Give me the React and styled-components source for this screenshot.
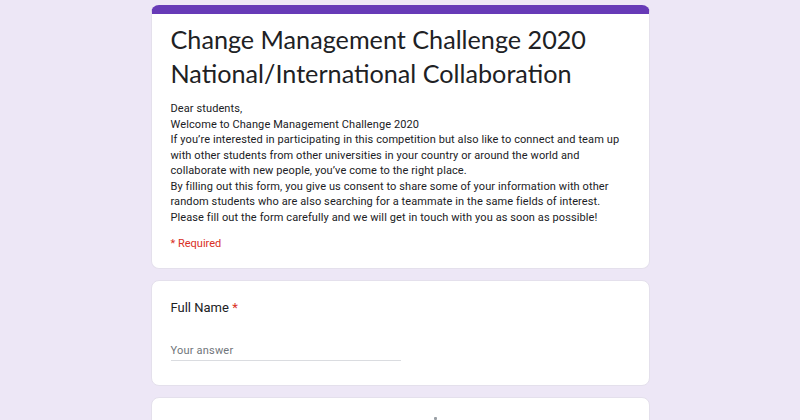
import React from 'react';
import styled, { createGlobalStyle } from 'styled-components';

const GlobalStyle = createGlobalStyle`
  html, body {
    margin: 0;
    padding: 0;
    background: #ede7f6;
    font-family: Roboto, "Liberation Sans", sans-serif;
    color: #202124;
  }
`;

const Page = styled.div`
  display: flex;
  flex-direction: column;
  align-items: center;
  gap: 11px;
  padding-top: 5px;
  height: 420px;
  overflow: hidden;
`;

const Card = styled.div`
  width: 499px;
  box-sizing: border-box;
  background: #fff;
  border-radius: 8px;
  border: 1px solid #e4e0ec;
  border-top: ${p => (p.$accent ? '9px solid #673ab7' : '1px solid #e4e0ec')};
  padding: ${p => p.$pad || '18px 19px 19px'};
  flex-shrink: 0;
`;

const Title = styled.h1`
  margin: 0;
  font-family: Lato, "Open Sans", sans-serif;
  font-weight: 400;
  font-size: 25.2px;
  line-height: 34px;
  color: #202124;
`;

const Description = styled.div`
  margin-top: 11px;
  font-size: 11px;
  line-height: 15.5px;
  letter-spacing: 0.1px;
  color: #202124;
`;

const Required = styled.div`
  margin-top: 12px;
  font-size: 11px;
  color: #d93025;
`;

const Question = styled.div`
  font-size: 13px;
  line-height: 18px;
  color: #202124;
`;

const Star = styled.span`
  color: #d93025;
`;

const Answer = styled.div`
  margin-top: 27px;
  width: 230px;
  border-bottom: 1px solid #dadce0;
  padding-bottom: 3px;
  font-size: 11px;
  letter-spacing: 0.2px;
  color: #70757a;
`;

const Dot = styled.div`
  width: 3px;
  height: 3px;
  margin: 19px 0 0 263px;
  background: #9aa0a6;
  border-radius: 1px;
`;

export default function App() {
  return (
    <>
      <GlobalStyle />
      <Page>
        <Card $accent $pad="8px 19px 18px">
          <Title>
            Change Management Challenge 2020
            <br />
            National/International Collaboration
          </Title>
          <Description>
            Dear students,
            <br />
            Welcome to Change Management Challenge 2020
            <br />
            If you’re interested in participating in this competition but also like to connect and team up
            with other students from other universities in your country or around the world and
            collaborate with new people, you’ve come to the right place.
            <br />
            By filling out this form, you give us consent to share some of your information with other
            random students who are also searching for a teammate in the same fields of interest.
            <br />
            Please fill out the form carefully and we will get in touch with you as soon as possible!
          </Description>
          <Required>* Required</Required>
        </Card>
        <Card $pad="18px 19px 24px">
          <Question>
            Full Name <Star>*</Star>
          </Question>
          <Answer>Your answer</Answer>
        </Card>
        <Card $pad="0 19px 40px">
          <Dot />
        </Card>
      </Page>
    </>
  );
}
